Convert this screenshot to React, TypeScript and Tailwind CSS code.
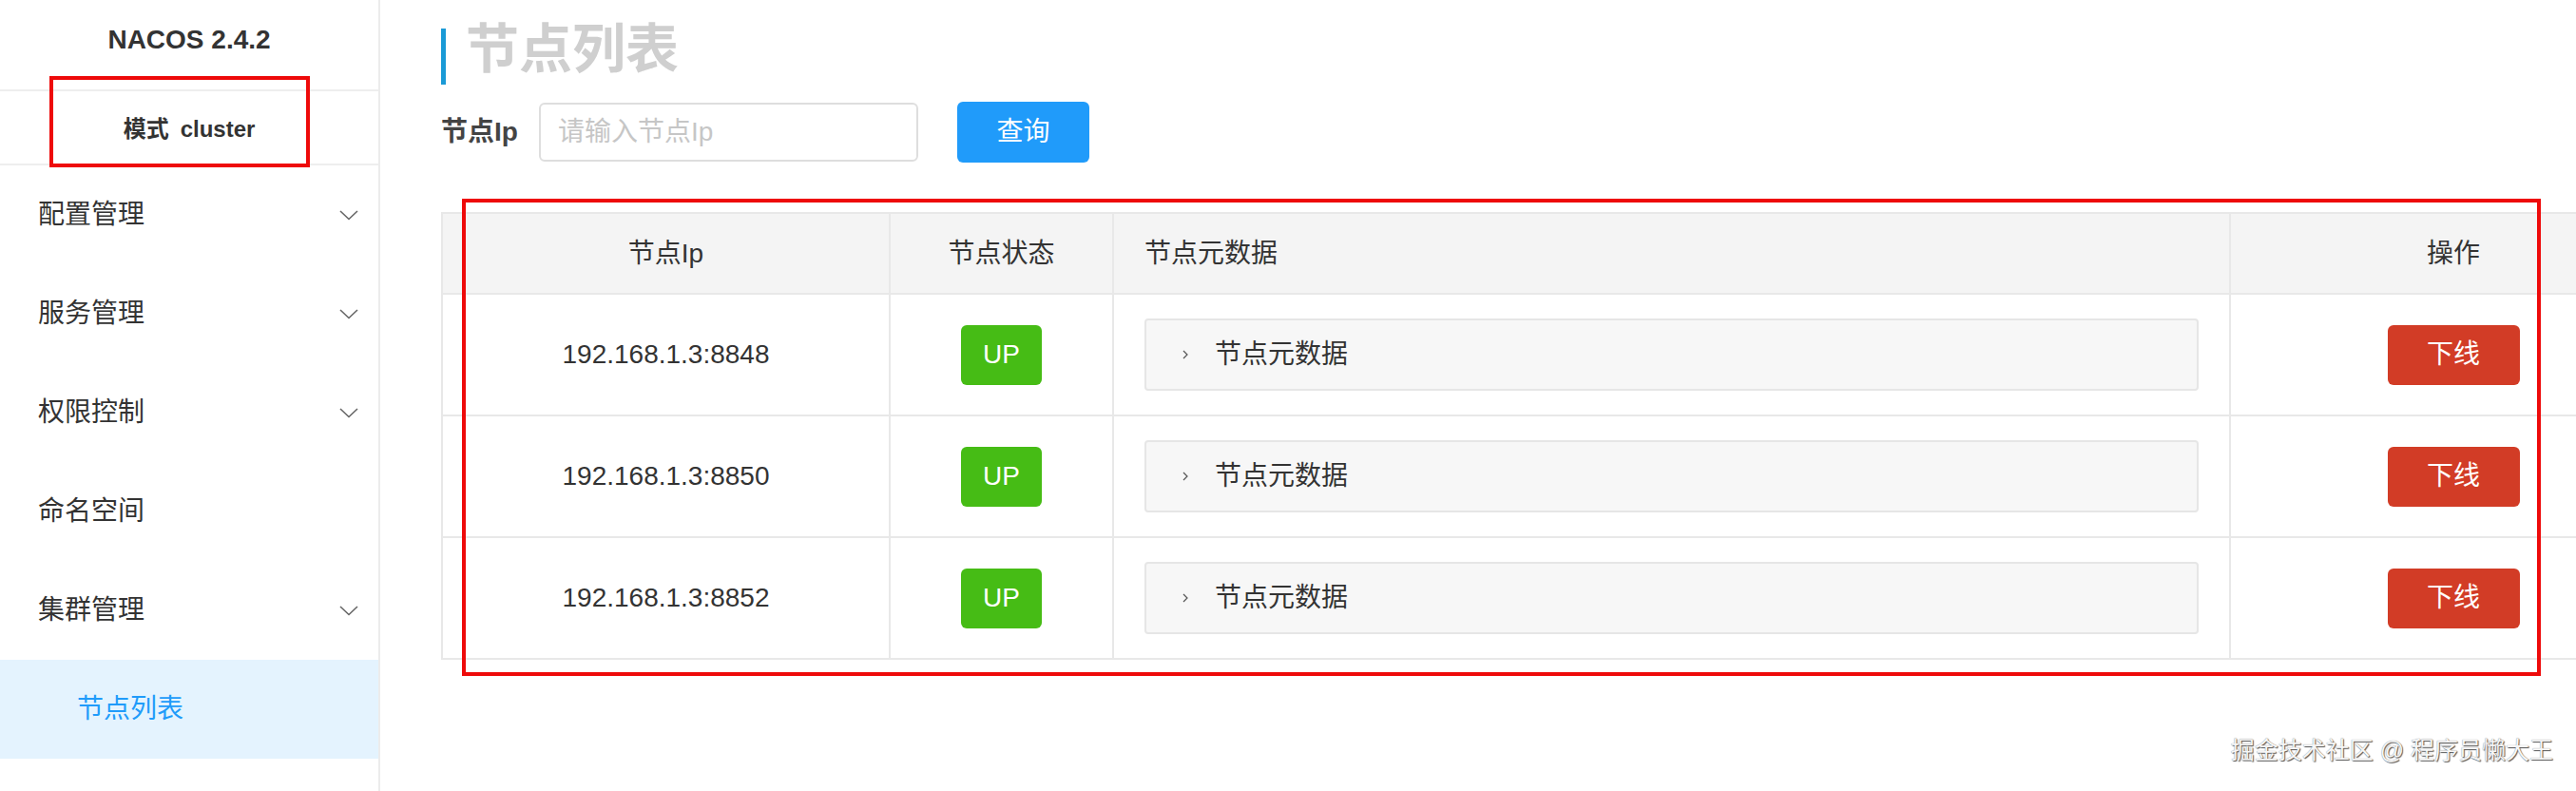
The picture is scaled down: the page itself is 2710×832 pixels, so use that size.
import React from "react";

const FONT = "font-['Liberation_Sans','Noto_Sans_CJK_SC',sans-serif]";

function ChevronDown() {
  return (
    <svg width="20" height="11" viewBox="0 0 20 11" fill="none">
      <polyline points="1,1 10,9.5 19,1" stroke="#666" strokeWidth="1.6" />
    </svg>
  );
}

function ChevronRight() {
  return (
    <svg width="6" height="10" viewBox="0 0 6 10" fill="none">
      <polyline points="1,1 5,5 1,9" stroke="#555" strokeWidth="1.2" />
    </svg>
  );
}

const menu = [
  { label: "配置管理", arrow: true },
  { label: "服务管理", arrow: true },
  { label: "权限控制", arrow: true },
  { label: "命名空间", arrow: false },
  { label: "集群管理", arrow: true },
];

const nodes = ["192.168.1.3:8848", "192.168.1.3:8850", "192.168.1.3:8852"];

function Sidebar() {
  return (
    <aside className="w-[400px] shrink-0 h-full border-r-2 border-[#ececec] flex flex-col">
      <div className="h-[96px] border-b-2 border-[#eeeeee] flex items-center justify-center pb-[10px]">
        <span className="text-[28px] font-bold text-[#333]">NACOS 2.4.2</span>
      </div>
      <div className="h-[78px] border-b-2 border-[#eeeeee] flex items-center justify-center pt-[4px]">
        <span className="text-[24px] font-bold text-[#333]">
          模式<span className="ml-[12px]">cluster</span>
        </span>
      </div>
      <nav className="flex flex-col">
        {menu.map((m) => (
          <div
            key={m.label}
            className="h-[104px] flex items-center justify-between pl-[40px] pr-[21px] text-[28px] text-[#333]"
          >
            <span>{m.label}</span>
            {m.arrow && <ChevronDown />}
          </div>
        ))}
        <div className="h-[104px] flex items-center pl-[81px] bg-[#e4f3fe] text-[28px] text-[#209bfa]">
          节点列表
        </div>
      </nav>
    </aside>
  );
}

function NodeTable() {
  const cell = "border-r-2 border-b-2 border-[#e8e8e8] flex items-center";
  return (
    <div className="mt-[52px] w-[2351px] border-l-2 border-t-2 border-[#e8e8e8] grid grid-cols-[471px_235px_1175px_470px] text-[28px] text-[#333]">
      <div className={`${cell} h-[85px] bg-[#f4f4f4] justify-center`}>节点Ip</div>
      <div className={`${cell} h-[85px] bg-[#f4f4f4] justify-center`}>节点状态</div>
      <div className={`${cell} h-[85px] bg-[#f4f4f4] pl-[32px]`}>节点元数据</div>
      <div className={`${cell} h-[85px] bg-[#f4f4f4] justify-center`}>操作</div>
      {nodes.map((ip) => (
        <React.Fragment key={ip}>
          <div className={`${cell} h-[128px] justify-center`}>{ip}</div>
          <div className={`${cell} h-[128px] justify-center`}>
            <span className="w-[85px] h-[63px] rounded-[6px] bg-[#46bc15] text-white flex items-center justify-center">
              UP
            </span>
          </div>
          <div className={`${cell} h-[128px] px-[32px]`}>
            <div className="w-full h-[76px] bg-[#f7f7f7] border-2 border-[#e6e6e6] rounded-[4px] flex items-center pl-[38px]">
              <ChevronRight />
              <span className="ml-[28px]">节点元数据</span>
            </div>
          </div>
          <div className={`${cell} h-[128px] justify-center`}>
            <button className="w-[139px] h-[63px] rounded-[6px] bg-[#d23c26] text-white">下线</button>
          </div>
        </React.Fragment>
      ))}
    </div>
  );
}

export default function App() {
  return (
    <div className={`${FONT} relative w-[2710px] h-[832px] overflow-hidden bg-white flex`}>
      <Sidebar />
      <main className="flex-1 pl-[64px] flex flex-col min-w-0">
        <div className="mt-[30px] h-[59px] flex items-start">
          <div className="w-[5px] h-[59px] bg-[#1a9ad6]" />
          <h1 className="ml-[21px] -mt-[6px] text-[56px] leading-none font-bold text-[#cfcfcf]">节点列表</h1>
        </div>
        <div className="mt-[18px] h-[64px] flex items-center">
          <label className="text-[28px] font-bold text-[#444] mr-[22px]">节点Ip</label>
          <input
            placeholder="请输入节点Ip"
            className="w-[399px] h-[62px] border-2 border-[#dedede] rounded-[6px] px-[18px] text-[28px] outline-none placeholder:text-[#c6c6c6]"
          />
          <button className="ml-[41px] w-[139px] h-[64px] rounded-[6px] bg-[#209bfa] text-white text-[28px]">
            查询
          </button>
        </div>
        <NodeTable />
      </main>

      {/* highlight frames */}
      <div className="absolute left-[52px] top-[80px] w-[274px] h-[96px] border-4 border-[#ee0a0a]" />
      <div className="absolute left-[486px] top-[209px] w-[2187px] h-[502px] border-4 border-[#ee0a0a]" />

      <div className="absolute right-[24px] bottom-[24px] text-[25px] text-[#f6f6f6] [text-shadow:1px_1px_1px_#555,0_0_1px_#777]">
        掘金技术社区 @ 程序员懒大王
      </div>
    </div>
  );
}
